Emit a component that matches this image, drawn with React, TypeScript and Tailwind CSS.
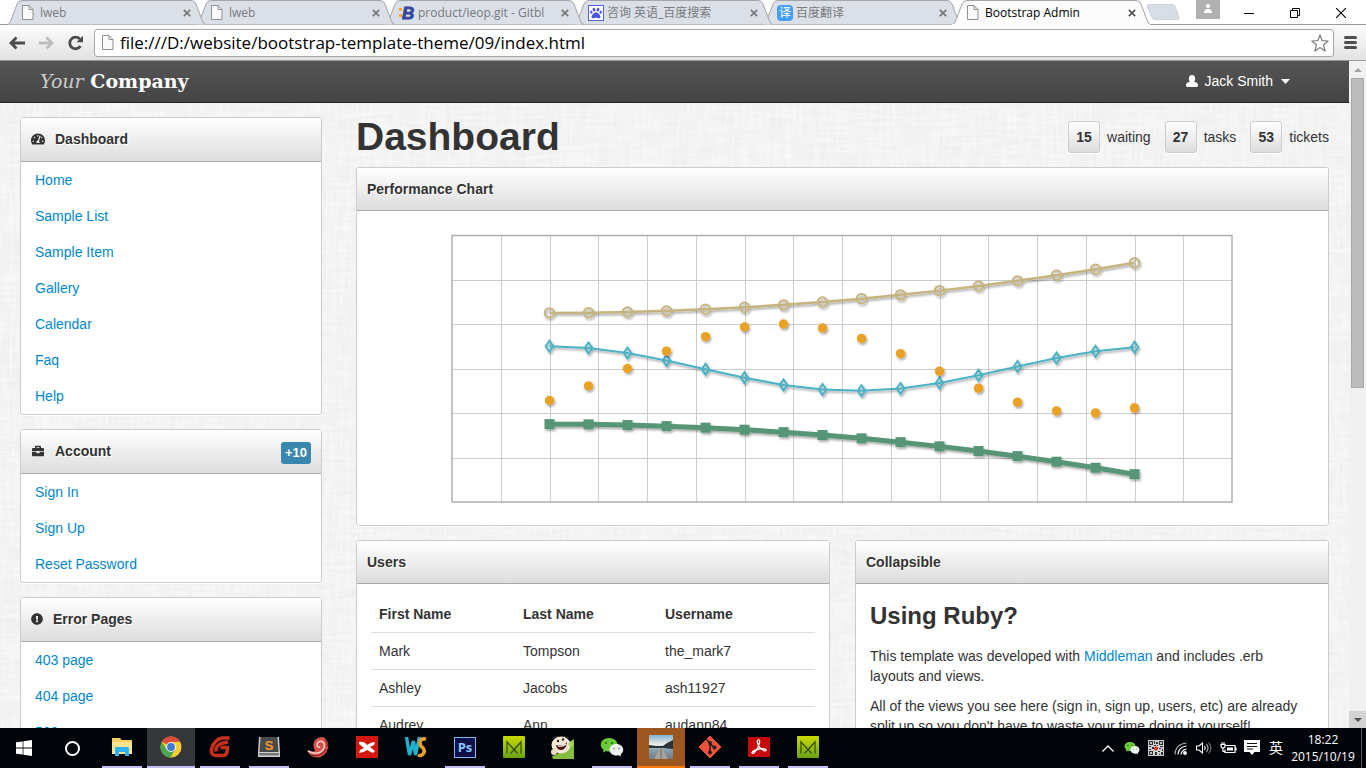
import type { ReactNode } from 'react';
import { FaBriefcase, FaExclamationCircle, FaTachometerAlt, FaPaw } from 'react-icons/fa';

/* ---------- Browser chrome ---------- */

function PageIcon() {
  return (
    <svg viewBox="0 0 13 15" className="h-[15px] w-[13px]" aria-hidden="true">
      <path d="M1.5 .5h6.500l4 4v10h-10.500z" fill="#fafafa" stroke="#8f8f8f" />
      <path d="M8 .5v4h4" fill="none" stroke="#8f8f8f" />
    </svg>
  );
}

function GitblitIcon() {
  return (
    <svg viewBox="0 0 16 16" className="size-4" aria-hidden="true">
      <rect x="0" y="3" width="3" height="3" fill="#f5a63b" />
      <rect x="0" y="9" width="3" height="3" fill="#f5a63b" />
      <text x="3" y="14" fontFamily="Liberation Sans, sans-serif" fontWeight="700" fontStyle="italic" fontSize="17" fill="#34459b" stroke="#34459b" strokeWidth=".8">B</text>
    </svg>
  );
}

function BaiduIcon() {
  return (
    <span className="flex size-4 items-center justify-center border border-[#5560e6] bg-white">
      <FaPaw className="size-3 text-[#4a55e0]" />
    </span>
  );
}

function TranslateIcon() {
  return (
    <span className="flex size-4 items-center justify-center rounded-sm bg-[#459df5] text-xs leading-4 text-white">译</span>
  );
}

type Tab = { title: string; icon: ReactNode; z: string };

const tabs: Tab[] = [
  { title: 'lweb', icon: <PageIcon />, z: 'z-5' },
  { title: 'lweb', icon: <PageIcon />, z: 'z-4' },
  { title: 'product/ieop.git - Gitbl', icon: <GitblitIcon />, z: 'z-3' },
  { title: '咨询 英语_百度搜索', icon: <BaiduIcon />, z: 'z-2' },
  { title: '百度翻译', icon: <TranslateIcon />, z: 'z-1' },
  { title: 'Bootstrap Admin', icon: <PageIcon />, z: 'z-10' },
];

function BrowserTab({ tab, active }: { tab: Tab; active: boolean }) {
  return (
    <div className={`relative h-[25px] w-[189px] min-w-0 shrink ${tab.z}`}>
      <svg viewBox="0 0 200 25" preserveAspectRatio="none" className="absolute top-0 left-0 h-[25px] w-[200px]" aria-hidden="true">
        <path
          d="M0 24.500C3 24.500 4 23 5 20L11 4Q12.500 .5 16 .5H185Q188.500 .5 190 4L196 20Q197.500 24.500 200 24.500"
          fill={active ? '#fcfcfc' : '#dbe0e8'}
          stroke="#a3a5a8"
        />
        {active && <path d="M1 24.500H199" stroke="#fcfcfc" strokeWidth="1" />}
      </svg>
      <div className="relative flex h-[25px] items-center pl-[15px]">
        <button role="tab" aria-selected={active} className="flex min-w-0 flex-1 items-center gap-[3px] text-left">
          <span className="flex w-4 shrink-0 items-center">{tab.icon}</span>
          <span className={`w-[136px] overflow-hidden whitespace-nowrap text-xs leading-5 ${active ? 'text-black' : 'text-[#77797c]'}`}>
            {tab.title}
          </span>
        </button>
        <button aria-label={`Close ${tab.title}`} className="flex size-4 shrink-0 items-center justify-center">
          <svg viewBox="0 0 8 8" className="size-2" aria-hidden="true">
            <path d="M.8 .8l6.400 6.400M7.200 .8L.8 7.200" stroke={active ? '#555' : '#777'} strokeWidth="1.700" />
          </svg>
        </button>
      </div>
    </div>
  );
}

function TabStrip() {
  return (
    <div className="flex h-[25px] items-stretch border-b border-[#9b9b9d] bg-white pr-[2px] pl-[6px]">
      <div role="tablist" aria-label="Tabs" className="flex h-[25px] min-w-0">
        {tabs.map((tab, i) => (
          <BrowserTab key={i} tab={tab} active={i === tabs.length - 1} />
        ))}
      </div>
      <button aria-label="New tab" className="ml-[6px] flex items-center">
        <svg viewBox="0 0 34 16" className="h-4 w-[34px]" aria-hidden="true">
          <path d="M3 .5h23q2 0 3 2l4 11q.5 2-2 2H9q-2 0-3-2L1.500 3Q.8 .5 3 .5z" fill="#d8dee7" stroke="#cdcfd2" />
        </svg>
      </button>
      <div className="ml-auto flex">
        <button aria-label="Profile" className="flex h-[19px] w-6 justify-center bg-[#b0b0b0] pt-1">
          <svg viewBox="0 0 10 9" className="h-[9px] w-[10px]" fill="#fff" aria-hidden="true">
            <circle cx="5" cy="2" r="2" />
            <path d="M1 9q0-4 4-4t4 4z" />
          </svg>
        </button>
        <button aria-label="Minimize" className="ml-[6px] flex h-[25px] w-[46px] items-center justify-center">
          <svg viewBox="0 0 10 10" className="size-[10px]" aria-hidden="true"><path d="M0 5.500h10" stroke="#000" /></svg>
        </button>
        <button aria-label="Restore" className="flex h-[25px] w-[46px] items-center justify-center">
          <svg viewBox="0 0 10 10" className="size-[10px]" fill="none" stroke="#000" aria-hidden="true">
            <path d="M.5 2.500h7v7h-7zM2.500 2.500v-2h7v7h-2" />
          </svg>
        </button>
        <button aria-label="Close window" className="flex h-[25px] w-[46px] items-center justify-center">
          <svg viewBox="0 0 10 10" className="size-[10px]" aria-hidden="true"><path d="M0 0l10 10M10 0L0 10" stroke="#000" strokeWidth="1.100" /></svg>
        </button>
      </div>
    </div>
  );
}

function Toolbar() {
  return (
    <div className="flex h-9 items-center border-b border-[#979797] bg-linear-to-b from-[#fcfcfc] to-[#e2e2e2] pr-[9px] pl-2">
      <button aria-label="Back" className="flex w-[17px]">
        <svg viewBox="0 0 17 14" className="h-[14px] w-[17px]" fill="none" stroke="#4c4c4c" strokeWidth="2.800" aria-hidden="true">
          <path d="M3 7h14M8.500 1.500L3 7l5.500 5.500" />
        </svg>
      </button>
      <button aria-label="Forward" className="ml-3 flex w-[17px]">
        <svg viewBox="0 0 17 14" className="h-[14px] w-[17px]" fill="none" stroke="#bdbdbd" strokeWidth="2.800" aria-hidden="true">
          <path d="M15 7H2M9.500 1.500L15 7L9.500 12.500" />
        </svg>
      </button>
      <button aria-label="Reload" className="ml-3 flex w-[18px]">
        <svg viewBox="0 0 18 16" className="h-4 w-[18px]" aria-hidden="true">
          <path d="M14.500 11A5.800 5.800 0 1 1 13.800 4" fill="none" stroke="#4c4c4c" strokeWidth="2.800" />
          <path d="M17 .8v6.400h-6.500z" fill="#4c4c4c" />
        </svg>
      </button>
      <form className="ml-[10px] flex h-7 flex-1 items-center rounded-[3px] border border-[#a8a8a8] bg-white pr-1 pl-[6px]">
        <PageIcon />
        <label htmlFor="address" className="sr-only">Address</label>
        <input
          id="address"
          type="text"
          defaultValue="file:///D:/website/bootstrap-template-theme/09/index.html"
          className="ml-[6px] h-6 min-w-0 flex-1 bg-transparent text-[17px] leading-6 text-black outline-none"
        />
        <button type="button" aria-label="Bookmark this page">
          <svg viewBox="0 0 18 18" className="size-[18px]" aria-hidden="true">
            <path d="M9 1l2.200 5.700 6 .3-4.700 3.900 1.600 6L9 13.500 3.900 16.900l1.600-6L.8 7l6-.3z" fill="#fff" stroke="#7c7c7c" strokeWidth="1.200" strokeLinejoin="round" />
          </svg>
        </button>
      </form>
      <button aria-label="Menu" className="ml-[10px] flex flex-col gap-[2px]">
        <span className="h-[3px] w-[13px] rounded-sm bg-[#505050]" />
        <span className="h-[3px] w-[13px] rounded-sm bg-[#505050]" />
        <span className="h-[3px] w-[13px] rounded-sm bg-[#505050]" />
      </button>
    </div>
  );
}

/* ---------- Admin page ---------- */

function Navbar() {
  return (
    <header className="flex h-[42px] items-center justify-between border-b border-[#222] bg-linear-to-b from-[#555] to-[#444] pr-[59px] pb-px pl-10">
      <a href="#" className="font-['DejaVu_Serif',serif] text-[19px] leading-5 font-bold text-white">
        <span className="font-normal text-[#ccc] italic">Your</span> Company
      </a>
      <button className="flex items-center text-sm leading-5 text-white">
        <svg viewBox="0 0 12 12" className="mr-[7px] h-3 w-3" fill="#fff" aria-hidden="true">
          <path d="M6 0C8 0 9.200 1.400 9.200 3.400 9.200 5 8.700 6 8 6.700 10.500 7.200 12 8 12 9.800 12 11.200 11.500 12 10.300 12H1.700C.5 12 0 11.200 0 9.800 0 8 1.500 7.200 4 6.700 3.300 6 2.800 5 2.800 3.400 2.800 1.400 4 0 6 0z" />
        </svg>
        Jack Smith
        <svg viewBox="0 0 9 5" className="ml-2 h-[5px] w-[9px]" fill="#fff" aria-hidden="true"><path d="M0 0h9L4.500 5z" /></svg>
      </button>
    </header>
  );
}

const menus = [
  {
    title: 'Dashboard',
    icon: <FaTachometerAlt className="size-[14px]" />,
    items: ['Home', 'Sample List', 'Sample Item', 'Gallery', 'Calendar', 'Faq', 'Help'],
  },
  {
    title: 'Account',
    icon: <FaBriefcase className="h-3 w-[14px]" />,
    badge: '+10',
    items: ['Sign In', 'Sign Up', 'Reset Password'],
  },
  {
    title: 'Error Pages',
    icon: <FaExclamationCircle className="size-3" />,
    items: ['403 page', '404 page', '500 page', '503 page'],
  },
];

function Sidebar() {
  return (
    <aside className="flex flex-col gap-[14px]">
      {menus.map((menu) => (
        <nav key={menu.title} aria-label={menu.title} className="rounded-[3px] border border-[#ccc] bg-white shadow-[0_1px_0_#fff]">
          <div className="flex h-[44px] items-center border-b border-[#aaa] bg-linear-to-b from-white to-[#ddd] px-[10px] pb-[2px]">
            {menu.icon}
            <h2 className="ml-[10px] text-sm leading-5 font-bold [text-shadow:1px_1px_0_#fff]">{menu.title}</h2>
            {menu.badge && (
              <span className="mt-1 ml-auto rounded-[3px] bg-[#3a87ad] px-1 text-[13px] leading-[22px] font-bold text-white">{menu.badge}</span>
            )}
          </div>
          <ul>
            {menu.items.map((item) => (
              <li key={item}>
                <a href="#" className="block px-[14px] py-2 text-sm leading-5 text-[#0088cc]">{item}</a>
              </li>
            ))}
          </ul>
        </nav>
      ))}
    </aside>
  );
}

function Card({ title, children }: { title: string; children: ReactNode }) {
  return (
    <section className="min-w-0 rounded-[3px] border border-[#ccc] bg-white shadow-[0_1px_0_#fff]">
      <h2 className="flex h-[43px] items-center border-b border-[#aaa] bg-linear-to-b from-white to-[#ddd] px-[10px] text-sm leading-5 font-bold [text-shadow:1px_1px_0_#fff]">
        {title}
      </h2>
      {children}
    </section>
  );
}

const LEFT = 2;
const TOP = 1.5;
const STEP_X = 48.75;
const STEP_Y = 44.5;

const px = (v: number) => LEFT + (v + 1) * 2 * STEP_X;
const py = (v: number) => TOP - 0.5 + ((6 - v) * STEP_Y) / 2;
const samples = Array.from({ length: 16 }, (_, i) => i * 0.4);
const series = (f: (v: number) => number) => samples.map((v) => [px(v), py(f(v))]);
const toPoints = (s: number[][]) => s.map((p) => p.join(',')).join(' ');

const cosine = series((v) => Math.cos(v));
const sine = series((v) => 2 * Math.sin(v - 0.8));
const powUp = series((v) => 2.5 + Math.pow(v / 4, 2));
const powDown = series((v) => -2.5 - Math.pow(v / 4, 2));

function PerformanceChart() {
  const width = STEP_X * 16;
  const height = STEP_Y * 6;
  return (
    <svg viewBox="0 0 785 270" className="mx-auto w-[785px] max-w-full" role="img" aria-label="Performance chart">
      <defs>
        <filter id="mark-shadow" x="-5%" y="-20%" width="110%" height="150%">
          <feDropShadow dx="1.200" dy="1.800" stdDeviation=".8" floodColor="#000" floodOpacity=".35" />
        </filter>
      </defs>
      <g stroke="#ccc" strokeWidth="1">
        {Array.from({ length: 15 }, (_, i) => {
          const x = Math.round(LEFT + (i + 1) * STEP_X) + 0.5;
          return <path key={i} d={`M${x} ${TOP}v${height}`} />;
        })}
        {Array.from({ length: 5 }, (_, i) => {
          const y = Math.floor(TOP + (i + 1) * STEP_Y) + 0.5;
          return <path key={i} d={`M${LEFT} ${y}h${width}`} />;
        })}
      </g>
      <rect x={LEFT} y={TOP} width={width} height={height - 0.5} fill="none" stroke="#b0b0b0" strokeWidth="1.500" />
      <g filter="url(#mark-shadow)" stroke="#4bb2c5" fill="none">
        <polyline points={toPoints(cosine)} strokeWidth="2" />
        {cosine.map(([x, y], i) => (
          <path key={i} d={`M${x} ${y - 5.5}l3.800 5.500l-3.800 5.500l-3.800 -5.500z`} strokeWidth="2" />
        ))}
      </g>
      <g filter="url(#mark-shadow)" fill="#eaa228">
        {sine.map(([x, y], i) => <circle key={i} cx={x} cy={y} r="4.700" />)}
      </g>
      <g filter="url(#mark-shadow)" stroke="#c5b47f" fill="none">
        <polyline points={toPoints(powUp)} strokeWidth="2.500" />
        {powUp.map(([x, y], i) => <circle key={i} cx={x} cy={y} r="4.700" strokeWidth="2" />)}
      </g>
      <g filter="url(#mark-shadow)">
        <polyline points={toPoints(powDown)} fill="none" stroke="#579575" strokeWidth="5" />
        {powDown.map(([x, y], i) => <rect key={i} x={x - 5} y={y - 5} width="10" height="10" fill="#579575" />)}
      </g>
    </svg>
  );
}

const stats = [
  ['15', 'waiting'],
  ['27', 'tasks'],
  ['53', 'tickets'],
];

const users = [
  ['Mark', 'Tompson', 'the_mark7'],
  ['Ashley', 'Jacobs', 'ash11927'],
  ['Audrey', 'Ann', 'audann84'],
];

function UsersTable() {
  return (
    <div className="px-[14px] pt-3 pb-4">
      <table className="w-full table-fixed text-left text-sm leading-5">
        <thead>
          <tr>
            <th scope="col" className="w-[144px] p-2 font-bold">First Name</th>
            <th scope="col" className="w-[142px] p-2 font-bold">Last Name</th>
            <th scope="col" className="p-2 font-bold">Username</th>
          </tr>
        </thead>
        <tbody>
          {users.map((row) => (
            <tr key={row[2]} className="border-t border-[#ddd]">
              {row.map((cell) => <td key={cell} className="p-2">{cell}</td>)}
            </tr>
          ))}
        </tbody>
      </table>
    </div>
  );
}

function MainContent() {
  return (
    <main className="min-w-0">
      <div className="mb-[10px] flex items-center justify-between">
        <h1 className="text-[39px] leading-10 font-bold">Dashboard</h1>
        <dl className="flex gap-[14px] text-sm leading-5">
          {stats.map(([count, label]) => (
            <div key={label} className="flex items-center gap-[7px]">
              <dd className="flex size-8 items-center justify-center rounded-[3px] border border-[#ccc] bg-linear-to-b from-white to-[#ddd] font-bold shadow-[0_1px_0_#fff]">{count}</dd>
              <dt>{label}</dt>
            </div>
          ))}
        </dl>
      </div>
      <div className="grid grid-cols-2 gap-x-[25px] gap-y-[14px]">
        <div className="col-span-2 grid">
          <Card title="Performance Chart">
            <div className="pt-[23px] pb-[21px]"><PerformanceChart /></div>
          </Card>
        </div>
        <Card title="Users"><UsersTable /></Card>
        <Card title="Collapsible">
          <div className="pt-3 pr-5 pl-[14px] text-sm leading-5">
            <h3 className="mb-[10px] text-2xl leading-10 font-bold">Using Ruby?</h3>
            <p className="mb-[10px]">
              This template was developed with <a href="#" className="text-[#0088cc]">Middleman</a> and includes .erb layouts and views.
            </p>
            <p className="mb-[10px]">
              All of the views you see here (sign in, sign up, users, etc) are already split up so you don't have to waste your time doing it yourself!
            </p>
          </div>
        </Card>
      </div>
    </main>
  );
}

function Scrollbar() {
  return (
    <div aria-hidden="true" className="flex w-[17px] shrink-0 flex-col items-center bg-[#f1f1f1]">
      <span className="flex h-[17px] items-center"><svg viewBox="0 0 8 4" className="h-1 w-2"><path d="M0 4h8L4 0z" fill="#a3a3a3" /></svg></span>
      <span className="h-[310px] w-[13px] border border-[#a8a8a8] bg-[#bcbcbc]" />
      <span className="mt-auto flex h-[17px] w-full items-center justify-center bg-[#d2d2d2]"><svg viewBox="0 0 8 4" className="h-1 w-2"><path d="M0 0h8L4 4z" fill="#505050" /></svg></span>
    </div>
  );
}

function Linen() {
  return (
    <svg className="absolute inset-0 size-full" aria-hidden="true">
      <filter id="weave-h" x="0" y="0" width="100%" height="100%">
        <feTurbulence type="fractalNoise" baseFrequency=".03 .3" numOctaves="2" seed="4" />
        <feColorMatrix values="0 0 0 0 1  0 0 0 0 1  0 0 0 0 1  .8 0 0 0 -.25" />
      </filter>
      <filter id="weave-v" x="0" y="0" width="100%" height="100%">
        <feTurbulence type="fractalNoise" baseFrequency=".3 .03" numOctaves="2" seed="9" />
        <feColorMatrix values="0 0 0 0 1  0 0 0 0 1  0 0 0 0 1  .8 0 0 0 -.25" />
      </filter>
      <rect width="100%" height="100%" filter="url(#weave-h)" />
      <rect width="100%" height="100%" filter="url(#weave-v)" />
    </svg>
  );
}

/* ---------- Taskbar ---------- */

function WeChat({ className }: { className: string }) {
  return (
    <svg viewBox="0 0 24 20" className={className} aria-hidden="true">
      <path d="M9 1C4 1 .8 4 .8 7.800c0 2 1 3.800 2.800 5L3 15.500l3-1.500q1.400.5 3 .5c5 0 8.500-3 8.500-6.700S14 1 9 1z" fill="#6cc93a" />
      <path d="M16.500 7c-4 0-7 2.500-7 5.700s3 5.800 7 5.800q1.200 0 2.300-.3l2.400 1.300-.5-2.200c1.500-1 2.500-2.700 2.500-4.600C23.200 9.500 20.300 7 16.500 7z" fill="#eef2ee" />
      <g fill="#286b12"><circle cx="6" cy="6" r="1.100" /><circle cx="12" cy="6" r="1.100" /></g>
      <g fill="#8a928a"><circle cx="14" cy="11.500" r=".9" /><circle cx="19" cy="11.500" r=".9" /></g>
    </svg>
  );
}

function MockingM() {
  return (
    <svg viewBox="0 0 22 22" className="size-[22px]" aria-hidden="true">
      <defs><linearGradient id="lime" x1="0" y1="0" x2="0" y2="1"><stop offset="0" stopColor="#c9db00" /><stop offset="1" stopColor="#6ba314" /></linearGradient></defs>
      <rect width="22" height="22" rx="1" fill="url(#lime)" />
      <path d="M4 17.500V6l7 7.500L18 6v11.500M7.500 17.500L15 9.500M14.500 17.500L11 13.500" fill="none" stroke="#33520c" strokeWidth="1.300" />
    </svg>
  );
}

type App = { name: string; icon: ReactNode; state?: 'open' | 'active' | 'alert' };

const apps: App[] = [
  {
    name: 'File Explorer', state: 'open',
    icon: (
      <svg viewBox="0 0 22 20" className="h-5 w-[22px]">
        <path d="M1 1h8l1.500 2H21v14H1z" fill="#f5cf62" /><path d="M1 5h20v12H1z" fill="#fde38f" />
        <path d="M4 19v-8q0-1 1-1h12q1 0 1 1v8h-4v-4H8v4z" fill="#2db4ee" />
      </svg>
    ),
  },
  {
    name: 'Google Chrome', state: 'active',
    icon: (
      <svg viewBox="0 0 22 22" className="size-[22px]">
        <circle cx="11" cy="11" r="10.500" fill="#f7cf2f" />
        <path d="M11 11L1.900 5.750A10.500 10.500 0 0 1 20.100 5.750L11 6z" fill="#dd4b3e" />
        <path d="M1.900 5.750A10.500 10.500 0 0 0 10.500 21.500L15.200 13.500 11 11 6.800 13.500z" fill="#4aa851" />
        <circle cx="11" cy="11" r="5" fill="#f3f3f3" /><circle cx="11" cy="11" r="3.900" fill="#3c7bd0" />
      </svg>
    ),
  },
  {
    name: 'G', state: 'open',
    icon: (
      <svg viewBox="0 0 22 22" className="size-[22px]">
        <path d="M20.500 2H13Q5 4 2.500 13q-1 6 4 6.500h8q3-.5 3.500-4l.5-4h-7M7 15.500q-1-5 5-8l7-1.500" fill="none" stroke="#c9301c" strokeWidth="3.600" strokeLinejoin="round" />
      </svg>
    ),
  },
  {
    name: 'Sublime Text', state: 'open',
    icon: (
      <svg viewBox="0 0 24 22" className="h-[22px] w-6">
        <path d="M2 1h20l1 16v4H1v-4z" fill="#d0d0d0" /><path d="M3.500 1h17l1 15h-19z" fill="#4a4a4a" /><path d="M2 17h20v2.500H2z" fill="#777" />
        <text x="12" y="14" textAnchor="middle" fontFamily="Liberation Sans, sans-serif" fontWeight="700" fontSize="13" fill="#f59b2d">S</text>
      </svg>
    ),
  },
  {
    name: 'Snail',
    icon: (
      <svg viewBox="0 0 22 22" className="size-[22px]">
        <path d="M0 14q5 3 8 1-3-6 0-11 5-5 10-2 4 4 3 10-2 8-9 9.500Q3 22 0 14z" fill="#d4524e" />
        <path d="M1 15q9 5 15-1 3-5 0-8-4-2-6 2 0 4 3 3" fill="none" stroke="#f9cfc8" strokeWidth="1.500" />
        <path d="M4 19q10 3 15-6M18 3q3 4 2 8" fill="none" stroke="#8e211f" strokeWidth="1.200" />
      </svg>
    ),
  },
  {
    name: 'XMind',
    icon: (
      <svg viewBox="0 0 22 22" className="size-[22px]">
        <rect width="22" height="22" fill="#d4170f" />
        <path d="M3 6q5-1 8 3 4-3 8-3l-1 3-4 2 5 4-2 2-6-3q-4 3-8 3l1-3 4-2-5-4z" fill="#fff" />
      </svg>
    ),
  },
  {
    name: 'WebStorm',
    icon: (
      <svg viewBox="0 0 24 22" className="h-[22px] w-6">
        <path d="M2.500 1l3 18 4-14 2 14 4-18" fill="none" stroke="#21b2cf" strokeWidth="3.400" />
        <path d="M22 3q-6-1-6 4 0 3 3 5 3 4-1 7-2 1-4 0" fill="none" stroke="#f0a02c" strokeWidth="3.600" />
      </svg>
    ),
  },
  {
    name: 'Photoshop', state: 'open',
    icon: (
      <span className="flex h-[21px] w-[22px] items-center justify-center border border-[#79b8f2] bg-[#0d1148] text-[13px] leading-4 font-bold text-[#8ac6ff]">Ps</span>
    ),
  },
  { name: 'Mockplus', icon: <MockingM /> },
  {
    name: 'Comic',
    icon: (
      <svg viewBox="0 0 24 24" className="size-6">
        <path d="M1 21q9-2 14-12l8-5v20H2z" fill="#85bd3e" />
        <ellipse cx="10" cy="10" rx="9.500" ry="8.500" fill="#f5e7d3" />
        <path d="M5 10q7 2 11-3-1 8-6 8-4 0-5-5z" fill="#4e1414" /><path d="M7 11q5 1 8-2" stroke="#fff" strokeWidth="1.200" fill="none" />
        <circle cx="7" cy="6" r="1.200" fill="#222" /><circle cx="12" cy="4.500" r="1.200" fill="#222" />
        <path d="M2 3l5-2M12 1l6 2" stroke="#333" />
        <circle cx="3" cy="17" r="3" fill="#f3dcc0" /><circle cx="20" cy="9" r="2.500" fill="#a9d465" />
      </svg>
    ),
  },
  { name: 'WeChat', state: 'open', icon: <WeChat className="h-5 w-6" /> },
  {
    name: 'Photo', state: 'alert',
    icon: (
      <svg viewBox="0 0 24 24" className="size-6">
        <defs><linearGradient id="sky" x1="0" y1="0" x2="0" y2="1"><stop offset="0" stopColor="#7fb2d4" /><stop offset=".4" stopColor="#f0eee6" /><stop offset=".6" stopColor="#8ba2b0" /><stop offset="1" stopColor="#6d7c86" /></linearGradient></defs>
        <rect width="24" height="24" fill="url(#sky)" />
        <path d="M0 10l7 1h7l4-3 6-3v9l-10-1H0z" fill="#28343a" /><path d="M11 13h2l6 11H5z" fill="#a9a59c" /><path d="M12 14v10" stroke="#6c6962" />
      </svg>
    ),
  },
  {
    name: 'Git', state: 'open',
    icon: (
      <svg viewBox="0 0 24 24" className="size-6">
        <path d="M12 1l11 11-11 11L1 12z" fill="#ee513b" stroke="#ee513b" strokeLinejoin="round" />
        <path d="M8.500 4.500L12 8v10M12 8.500l4 4" stroke="#20201f" strokeWidth="1.500" fill="none" />
        <g fill="#20201f"><circle cx="12" cy="8" r="1.900" /><circle cx="12" cy="17.500" r="1.900" /><circle cx="16.500" cy="12.500" r="1.900" /></g>
      </svg>
    ),
  },
  {
    name: 'Adobe Reader', state: 'open',
    icon: (
      <svg viewBox="0 0 22 20" className="h-5 w-[22px]">
        <rect width="22" height="20" fill="#c60a0a" />
        <path d="M10 3q2-1 1.500 3Q10 12 6 16q-2 1-2-.5 1-2 7-3.500 5-1 7 .5.500 2-2 1.200-5-2-6.500-8Q9 3.500 10 3z" fill="none" stroke="#fff" strokeWidth="1.300" />
      </svg>
    ),
  },
  { name: 'Mockplus project', state: 'open', icon: <MockingM /> },
];

const appStyles = {
  idle: { button: '', bar: 'w-10 bg-transparent' },
  open: { button: '', bar: 'w-10 bg-[#c3bdf3]' },
  active: { button: 'bg-[#36373b]', bar: 'w-12 bg-[#c3bdf3]' },
  alert: { button: 'bg-[#9c561f]', bar: 'w-12 bg-[#ff7a00]' },
};

function Tray() {
  const slot = 'flex w-6 items-center justify-center';
  return (
    <div className="ml-auto flex items-stretch text-white">
      <button aria-label="Show hidden icons" className={slot}>
        <svg viewBox="0 0 12 7" className="h-[7px] w-3" fill="none" stroke="#fff" strokeWidth="1.300"><path d="M.5 6.500L6 1l5.500 5.500" /></svg>
      </button>
      <button aria-label="WeChat" className={slot}><WeChat className="h-[14px] w-4" /></button>
      <button aria-label="QR code" className={slot}>
        <svg viewBox="0 0 16 16" className="size-4">
          <rect width="16" height="16" fill="#d0d0d0" />
          <path d="M1 1h4v4H1zM11 1h4v4h-4zM1 11h4v4H1zM6 1h1v3H6zM8 2h2v2H8zM1 6h2v1H1zM4 7h2v2H4zM1 9h2v1H1zM7 12h2v3H7zM10 11h2v1h-2zM13 12h2v3h-2zM11 14h1v1h-1zM12 6h3v1h-3zM11 8h2v1h-2zM14 9h1v2h-1zM6 5h2v1H6zM9 5h1v1H9z" fill="#333" />
          <path d="M2 2h2v2H2zM12 2h2v2h-2zM2 12h2v2H2z" fill="#bbb" />
          <circle cx="8" cy="8.500" r="2" fill="#e3262c" />
        </svg>
      </button>
      <button aria-label="Network" className={slot}>
        <svg viewBox="0 0 13 13" className="size-[13px]" fill="none" stroke="#fff" strokeWidth="1.200">
          <path d="M1 12.500Q1.500 2 12.500 1" stroke="#aaa" /><path d="M4 12.500Q4.500 5 12.500 4" /><path d="M7 12.500Q7.500 8 12.500 7" /><circle cx="11" cy="11" r="1.300" fill="#fff" />
        </svg>
      </button>
      <button aria-label="Volume" className={slot}>
        <svg viewBox="0 0 16 14" className="h-[14px] w-4" fill="none" stroke="#fff" strokeWidth="1.100">
          <path d="M.5 5v4h2.500l3.500 3V2L3 5z" /><path d="M8.500 5q1.500 2 0 4" /><path d="M10.500 3.200q3 3.800 0 7.600" stroke="#aaa" /><path d="M12.600 1.500q4.500 5.500 0 11" stroke="#777" />
        </svg>
      </button>
      <button aria-label="Battery" className={slot}>
        <svg viewBox="0 0 17 12" className="h-3 w-[17px]" fill="none" stroke="#fff" strokeWidth="1.200">
          <path d="M5.500 3.500H15v7H5v-3M16 5.500v3" /><path d="M1 2.500h4v2q-.5 1.500-2 1.500T1 4.500zM2 .3v2M4 .3v2M3 6v3.500h2" /><path d="M7 5.500h6v3H7z" fill="#fff" stroke="none" />
        </svg>
      </button>
      <button aria-label="Notifications" className={slot}>
        <svg viewBox="0 0 16 16" className="size-4"><path d="M0 0h16v12h-5.500L8 15l-2.500-3H0z" fill="#fff" /><path d="M3 3.500h10M3 6.500h10M3 9h6" stroke="#111" strokeWidth="1.200" /></svg>
      </button>
      <button aria-label="Input language" className={`${slot} text-sm leading-5`}>英</button>
      <button className="mr-[3px] flex w-[70px] flex-col items-center justify-center text-xs leading-[17px]">
        <time>18:22</time>
        <time>2015/10/19</time>
      </button>
      <span className="mr-1 border-r border-[#55585d]" />
    </div>
  );
}

function Taskbar() {
  return (
    <footer className="flex h-10 shrink-0 items-stretch bg-[#010409]">
      <button aria-label="Start" className="flex w-12 items-center justify-center">
        <svg viewBox="0 0 16 16" className="size-4" fill="#fff"><path d="M0 2.300l6.700-.9v6.200H0zM7.400 1.300L16 0v7.600H7.400zM0 8.400h6.700v6.200L0 13.700zM7.400 8.400H16V16l-8.600-1.300z" /></svg>
      </button>
      <button aria-label="Cortana" className="flex w-12 items-center justify-center">
        <span className="size-[15px] rounded-full border-2 border-white" />
      </button>
      <div className="ml-[2px] flex gap-px">
        {apps.map((app) => {
          const style = appStyles[app.state ?? 'idle'];
          return (
            <button key={app.name} aria-label={app.name} className={`flex w-12 flex-col items-center ${style.button}`}>
              <span className="flex flex-1 items-center">{app.icon}</span>
              <span className={`h-[2px] ${style.bar}`} />
            </button>
          );
        })}
      </div>
      <Tray />
    </footer>
  );
}

export default function App() {
  return (
    <div className="flex h-screen flex-col overflow-hidden bg-white font-['Open_Sans','Noto_Sans_CJK_SC',sans-serif]">
      <TabStrip />
      <Toolbar />
      <div className="flex min-h-0 flex-1">
        <div className="flex-1 overflow-hidden bg-[#efefef] font-['Liberation_Sans',Arial,sans-serif] text-[#333]">
          <Navbar />
          <div className="relative">
            <Linen />
            <div className="relative grid grid-cols-[302px_minmax(0,1fr)] gap-[34px] px-5 pt-[14px]">
              <Sidebar />
              <MainContent />
            </div>
          </div>
        </div>
        <Scrollbar />
      </div>
      <Taskbar />
    </div>
  );
}
